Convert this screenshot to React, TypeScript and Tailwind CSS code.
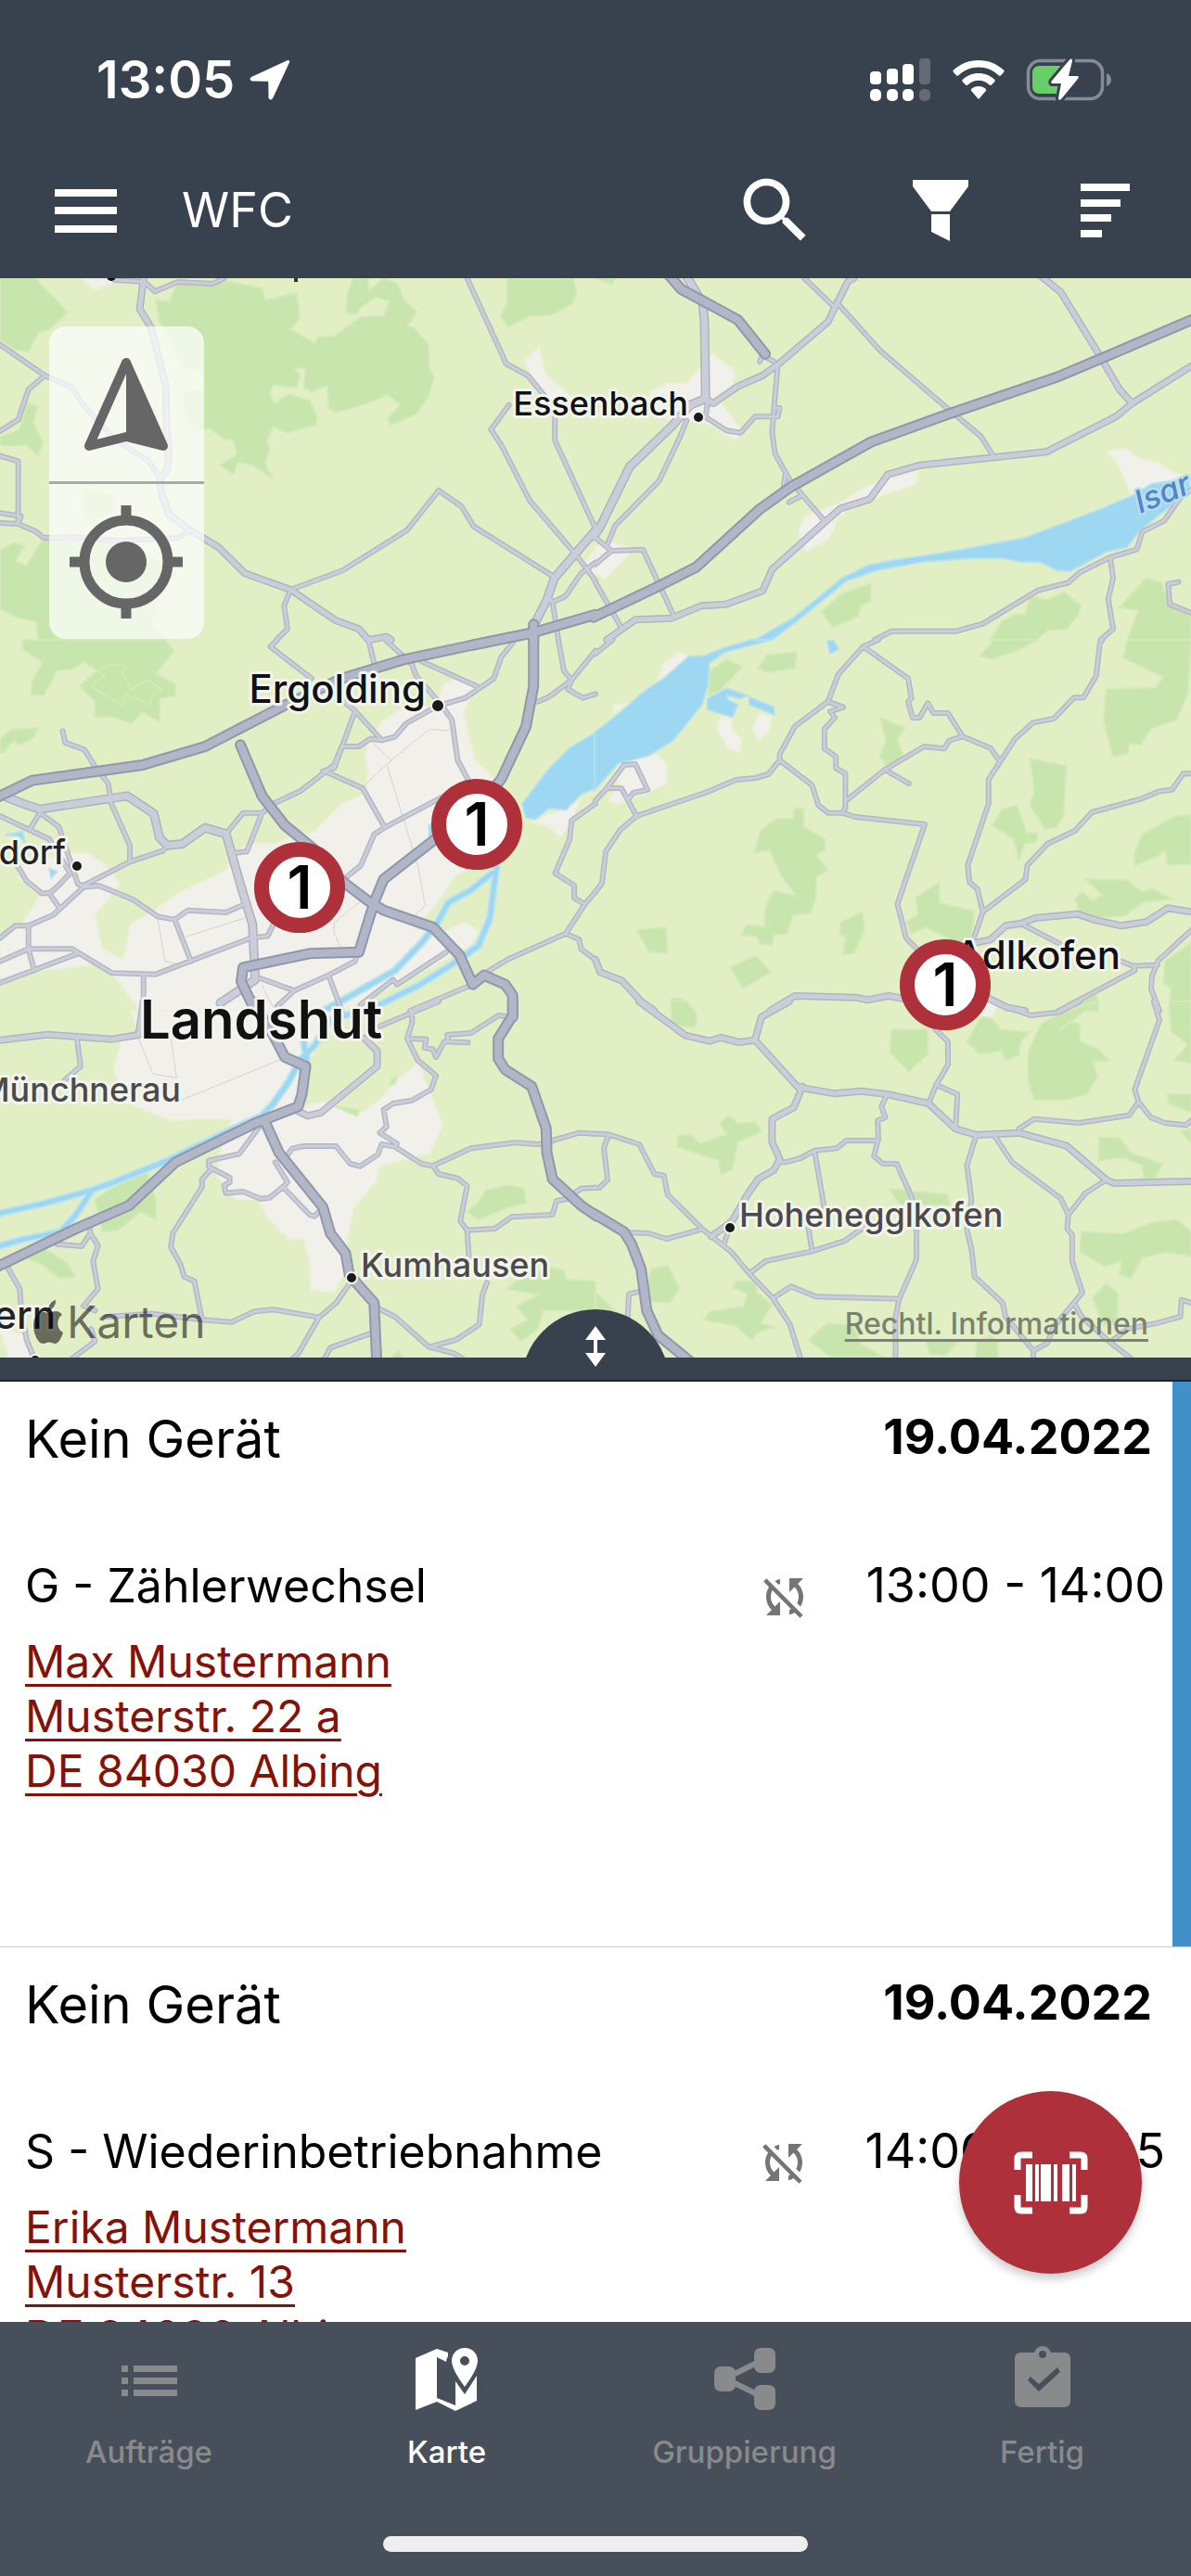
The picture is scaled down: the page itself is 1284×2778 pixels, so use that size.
import React from 'react';
import { MdSearch, MdSyncDisabled } from 'react-icons/md';

type Layer = 'urban' | 'forest' | 'water' | 'river' | 'thin' | 'minor' | 'mid' | 'wide' | 'major';

type Tile = { x: number; y: number } & Record<Layer, string>;

// Each tile carries its own 1568 x 1200 grid
const tiles: Tile[] = [
  {
    x: 0,
    y: -10,
    urban: 'M1420 255L1435 340 1500 410 1568 425V450L1440 430 1380 300ZM215 30H320L250 68ZM1540 950L1568 910V990Z',
    forest:
      'M0 0H70L178 140 130 195 100 208 75 268 40 262 0 230ZM410 100L445 105 470 40H600L690 62 698 102 780 78 790 160 765 195 828 240 838 220 880 218 950 155 985 152 1010 155 1025 105 990 90 950 125 940 145 912 145 914 80 930 30H970V70L1010 30 1045 45 1065 100 1098 140 1072 185 1090 190 1128 245 1130 320 1143 350 1130 410 1095 470 1030 505 1020 485 1055 440 1020 408 955 440 885 465 865 450 862 378 820 398 800 385 805 320 775 322 790 345 780 385 720 375 710 405 725 435 760 405 815 425 835 480 832 505 755 530 720 510 702 560 710 580 698 630 717 678 665 635 625 625 615 665 580 635 625 600 615 555 590 550 550 515 515 530 485 470 480 400 535 385 535 330 480 320 440 220 420 170ZM1335 30H1510L1518 85 1505 115 1450 150 1395 152 1338 188 1318 155 1335 110ZM70 430L98 445 88 500 113 560 100 605 70 570 20 572 0 570V545L50 520 60 480ZM0 910L35 885 65 895 40 945 70 960 110 880 180 870 350 880 420 950 470 990 410 1040 415 1110 400 1150 430 1200H100L95 1140 50 1130 0 1100ZM215 705L300 730 295 785 245 820 215 780Z',
    water: '',
    river: '',
    thin: '',
    minor:
      'M0 245L118 345 188 382 220 440 300 550 390 620 425 680M118 345L75 390 48 488 0 525M0 605L48 622V825M0 790L55 800 48 825M0 822L48 825 95 850 115 870 220 868 300 880 470 870 500 845M378 40L408 73 468 42 560 48 590 30M300 35L378 42M765 1038L748 1090 757 1165 728 1200M765 1038L903 975 1072 845 1155 717 1215 768 1247 833 1453 992M1230 30L1333 307 1390 345 1440 420M1340 440L1293 520 1320 570 1395 750 1510 915 1545 970 1568 1010M1461 480V555L1568 840M1440 1060L1455 1078 1488 1060 1530 985 1568 950M1455 1078L1470 1200',
    mid: 'M378 30L368 130 398 190 437 382 438 500 445 600 440 650 420 680 425 725 445 795 500 845 575 900 645 985 765 1038 885 1138 945 1165 970 1200 1018 1190 1030 1200',
    wide: 'M1572 840L1460 1000 1440 1070 1405 1155',
    major: 'M1240 1218L1400 1178 1568 1118M1405 1150V1205',
  },
  {
    x: 642,
    y: -10,
    urban:
      'M310 275L368 335 362 375 330 435 385 520 370 555 310 510 270 490 200 500 140 420 145 400 190 370 240 370ZM850 650L845 695 760 730 690 760 640 800 615 870 555 912 535 855 550 800 640 760 720 700ZM1350 590L1400 582 1420 608 1485 630 1530 665 1560 668 1410 725 1380 640ZM0 900L40 885 100 905 25 1005 0 980Z',
    forest:
      'M725 1018V1075L700 1090 690 1125 625 1160 595 1110 650 1050ZM1145 1060L1190 1070 1235 1045 1278 1090 1270 1120 1240 1165 1190 1170 1160 1200H1040L1070 1140 1110 1115 1130 1120ZM1450 1000L1490 1015 1510 1085 1568 1115V1200H1400L1430 1105 1380 1095ZM0 30H50L45 50Z',
    water:
      'M1560 680L1465 695 1420 730 1345 770 1250 815 1130 870 1000 900 960 910 800 940 720 958 650 1000 600 1050 520 1130 420 1200H465L530 1140 600 1070 660 1010 740 975 860 948 1000 935 1070 935 1120 948 1170 948 1215 975 1250 978 1300 945 1345 915 1400 900 1430 850 1490 790 1568 720Z',
    river: '',
    thin: '',
    minor:
      'M550 30L630 125M635 108L750 265 935 460 1015 542 1047 605M295 430L290 480 345 523 382 530 420 478 480 478 485 450 470 450M240 490L220 550 168 685 52 830 30 895M0 870L42 912 125 908 205 1120M42 912L0 955M0 1015L70 1165M1355 933L1363 1000 1350 1068 1363 1165 1330 1200M1535 1013L1508 1020 1512 1085 1568 1113M432 300L440 280 470 300M500 665L495 705M510 755L540 735M480 310L470 450 465 530 473 598 510 680 540 725 605 818M1568 715L1540 740 1497 815 1440 850 1425 908 1355 933 1275 982 1245 1015 1165 1040 1020 1148 950 1172 780 1172 735 1200',
    mid: 'M680 30L665 40 630 125 613 170 480 310 440 345 375 380 310 435 290 420M1175 25L1225 75 1325 275 1380 390 1413 435M1568 315L1413 435 1370 478 1187 592 855 635 770 665 722 745 645 775 605 818 465 972 440 1042 343 1085 278 1090 200 1130 105 1135 30 1200',
    wide: 'M240 25L282 110 287 170 290 420 250 440 200 510 90 640 10 840 -5 865',
    major: 'M1575 162L1345 283 1215 350 940 465 725 560 515 705 430 780 265 965 160 1030 -5 1127M190 15L225 65 375 165 447 275',
  },
  {
    x: 0,
    y: 390,
    urban:
      'M0 960L50 930 80 880 110 820 50 770 50 730 180 690 230 690 280 730 315 790 270 860 250 885 268 1000 325 1035 345 920 400 880 470 820 590 750 630 690 650 660 720 660 780 635 830 620 900 530 960 500 970 420 960 370 975 330 1010 260 1060 220 1150 215 1170 140 1200 130 1250 150 1220 240 1250 390 1310 460 1340 700 1200 760 1150 850 1090 940 1180 940 1220 915 1260 940 1240 990 1100 1080 1000 1140 900 1202H370L310 1100 250 1050 100 1070 0 1100ZM1400 590L1480 550 1525 520 1500 600 1475 635 1440 600Z',
    forest:
      'M60 0H435L458 35 430 80 410 110 462 145V180L420 190V265L375 235 345 270 300 250H250V200L210 150 245 110 290 80 330 85 322 105 345 160 390 130 425 160 400 180 395 210 330 175 325 215 240 150 275 115 220 70 190 95 150 100 115 180 82 178 85 130 112 75 60 30ZM30 290L100 285 90 315 50 340 35 325 10 365H0V320Z',
    water:
      'M1568 300L1500 350 1440 425 1375 530 1385 575 1410 580 1445 545 1490 550 1530 500 1568 480ZM130 740L150 750 135 770ZM1130 600L1145 595V645L1130 635ZM15 630L60 620 65 655 50 635Z',
    river:
      'M1308 730L1290 900 1260 990 1190 1050 1100 1120 1000 1180 950 1210M1295 755L1240 810 1180 850 1150 920 1110 980 1040 1070 940 1140 845 1205',
    thin: 'M975 325L1030 390 960 470M1030 390L1130 290 1180 293M1020 410L1100 730 1120 860 1090 895M415 900L435 1040 470 1050M490 960L645 900M950 845L880 915V950L895 990M690 1120L720 1190',
    minor:
      'M165 295L172 333 222 355 250 410 285 465 293 530 342 665V718M105 560L155 605 205 790 220 795 342 718 430 682 440 665M105 560L80 610M0 570L130 645 185 755 150 800 130 820 110 820 70 780 40 720M130 820L158 870M0 965L40 925 75 925 140 890 220 800 260 795 350 840 415 895 460 905 495 875 595 882 640 858M75 925V1000L90 1070M0 1040L75 1000H190L205 1015 0 1110M190 1000L295 1078 410 1082 500 1040 660 965 705 958 720 920M460 905L503 1040M378 1082V1200M595 628L640 560H690L720 530 790 490 880 405 900 345 945 345 975 320 1005 325 1040 313 1070 270 1150 215 1225 188 1300 125 1320 55 1350 10M690 560L650 685 615 690M850 425L880 415 935 230 1005 325M935 230L905 200M820 125L712 22 730 0M855 425L955 480 1013 607M1170 505L1013 607 985 630 950 730 915 765M970 0L985 75M1015 0L1085 80 1095 115 1165 215 1190 260 1205 390 1240 470M1110 70L1255 150M1470 0L1485 100 1505 130 1445 185 1415 200M1568 35L1505 130 1495 160 1535 188 1568 175M1568 530L1505 585 1500 645 1462 755 1512 795V835L1540 855 1490 950 1335 1035 1275 1080 1245 1115 1080 1200M1490 950L1525 970 1530 1000 1568 1035M1540 855L1568 815M940 1020L935 1040 865 1085 775 1135 685 1095M865 1085L900 1200M775 1135L730 1185M1175 1010L1045 1115 1035 1100 950 1180',
    mid: '',
    wide: 'M10 505L60 530 105 548 335 505 405 562 420 640 440 665 480 660 540 608 595 628 635 800 665 920 672 1100 580 1175',
    major:
      'M-5 508L85 455 375 405 540 345 745 215 900 125 1060 65 1240 18 1400 -22M1405 -20V150L1385 280 1320 450 1260 540 1140 650 1010 775 985 850 945 1010 815 1015 640 1060 635 1105 668 1190 680 1215M633 340L690 505 750 600 820 670 900 780 970 845 1010 875 1140 930 1210 1020 1245 1115 1275 1085 1330 1115 1350 1150V1220',
  },
  {
    x: 642,
    y: 390,
    urban:
      'M220 40L245 55 165 130 180 75ZM50 210H80L50 235ZM60 400L160 370 185 400 188 465 60 530 35 520 60 470ZM330 250L360 255 358 290 385 325 378 365 350 350 320 285ZM430 240L463 250 455 300 430 325 415 290Z',
    forest:
      'M345 65L388 85 330 160 297 180 300 100ZM450 50L530 38 525 92 455 105 428 92ZM1050 0H1165L1110 35 1045 62 1012 52ZM1400 0H1568L1560 170 1530 260 1465 285 1435 340 1405 335 1400 370 1362 378 1338 260 1345 160 1475 155 1495 120 1390 58ZM750 252L815 285 795 320 808 370 800 400 765 405 748 375 765 330ZM1145 385L1240 408 1232 570 1215 605 1185 612 1143 535 1155 490ZM1070 548L1110 535 1135 625H1165L1160 655 1130 660 1115 710 1100 645 1045 600ZM525 545H548V605L605 645V680L580 695 612 745 582 765 580 840 565 885 520 890 505 950 470 955 465 988 435 985 425 960 385 955 398 920 445 930 447 865 468 812 530 830 490 765 458 680 418 690 435 615 475 580 520 578ZM108 938L185 930 190 1015 140 1008ZM355 1060L422 1022 462 1075 388 1128ZM645 915L702 880 708 940 680 1015 652 1018 660 965 643 950ZM905 785V850L998 878 990 960 965 990 870 930 830 950 818 910 850 890 842 835ZM1568 568V725L1505 728 1500 680 1480 700 1420 730 1418 700 1438 632 1525 570ZM1290 775L1400 778 1438 815 1465 805 1520 838 1440 850 1395 892 1330 900 1275 880 1262 840 1280 815 1310 845 1335 825ZM200 1160L225 1158 262 1200H200ZM1320 1145L1325 1200H1230ZM1568 980L1500 1040 1495 1110 1515 1130 1510 1200H1568Z',
    water:
      'M465 0L340 40 300 75 295 150 280 210 205 325 140 375 60 400 -2 485V300L70 230 130 165 180 125 245 55 285 52 340 25 410 0ZM295 190L345 158 400 180 380 190 345 180 350 195 375 210 360 250 295 225ZM405 185L470 218V242L405 210ZM610 5L625 0 640 30 618 45Z',
    river: '',
    thin: '',
    minor:
      'M745 0L705 22 640 110 612 200 525 280 485 370V390L570 470 587 535 612 560H650L685 573 867 597 795 855 818 965 850 1005M705 22L823 125 832 190 823 200 835 252H853L875 205 890 237H928L967 313 1040 350 1065 395M612 200L652 218 618 232 630 252 603 288V352L633 378V415L658 433V545L650 560M660 520L762 420 865 345 918 352 932 325 967 313M762 420L825 465M1335 0L1328 12 1318 118 1285 187H1260L1207 255 1152 268 1105 320 1035 452V530L980 730 985 785 1005 805 1020 880 992 980M1568 433H1548L1518 485 1485 490 1435 515 1307 558 1262 618 1190 660 1137 730 1132 775 1020 880M485 390L455 435 422 447 370 453 288 495 108 570 65 615 27 685 17 788 0 815M108 570L85 518 100 495 137 485 105 402 75 405 30 480 0 520M30 480H68L85 518M1120 918L1225 985M1568 940L1480 1040 1465 1090 1463 1130 1485 1200M1480 1052L1415 1055 1385 1040M1415 1055L1420 1070 1220 1200M0 45L45 0',
    mid: 'M992 982L1040 970 1080 925 1120 918 1158 900 1268 887 1320 908 1385 925 1450 913 1507 868 1568 880M0 1035L12 1075 70 1103 120 1170 155 1200M460 1200L525 1152 685 1157 715 1165 772 1152 830 1165M1035 1160L1085 1190 1130 1200',
    wide: '',
    major: '',
  },
  {
    x: 0,
    y: 780,
    urban:
      'M345 30H940L840 130 780 280 790 345 850 325 885 345 940 370 1000 320 1040 260 1100 200 1130 290 1165 400 1130 490 1000 530 990 580 930 670 910 800 905 880 880 940 820 935 815 840 800 765 760 770 700 690 680 640 620 640 570 560 580 490 610 380 540 378 450 385 320 320 300 210 320 130 365 100ZM0 1060L60 1080 90 1155H25Z',
    forest:
      'M385 545L410 640V705L370 680 310 740 270 745 250 640 300 600ZM60 825L120 800 175 845 200 890 155 895 110 850ZM1335 595L1380 605 1385 650 1330 670 1260 705 1230 680 1260 650 1280 610ZM1335 930L1370 895 1450 860 1485 870 1490 900 1568 905V1000H1430L1415 1060 1370 1100 1345 1060 1390 1030 1360 985 1420 950ZM1030 1155L1048 1130 1062 1155ZM1030 250L1045 240 1040 265 1028 270ZM885 340L945 350 940 370Z',
    water: '',
    river:
      'M0 685L110 655 230 615 300 585 440 515 600 420 690 370 720 330 760 260 790 190 830 140 870 60 950 30M0 790L60 770 160 745 200 690 240 615M800 130L808 190',
    thin: 'M365 120L403 235 465 247 450 120M480 318L740 187',
    minor:
      'M203 122L212 210 170 255M1000 80L1155 0M1085 35V70L1072 120 1100 190 1148 240 1135 285 1085 320 1035 330 1010 350 1018 405 1000 425 1045 460 1040 470 1110 525 1140 532 1240 475 1355 457 1420 462 1525 425 1568 428M1075 120L1122 122 1118 150 1140 155 1148 180 1170 130 1232 133M1180 125L1178 108 1240 102 1313 45 1330 48M1040 470L1005 462 995 495 948 533 922 525 885 468H800L770 475 755 500M1140 532L1155 558 1205 572 1230 597 1212 710 1230 740 1235 830M1230 740L1303 735 1347 697 1455 690 1465 645 1490 640 1530 605 1568 602M725 520L757 585 745 600 710 635 685 638 640 615 595 620 590 595 605 585V570L550 535V515L630 493 680 410M745 600L815 690 828 695 850 665M555 545L532 575V600L455 750 450 795 475 850 485 890 512 905 532 1030 610 1037 670 1003 720 997 840 1022M925 905L885 975 840 1022 785 1140 770 1155M985 1070L870 1120 855 1155M992 990L1040 1020 1130 1118 1200 1095 1262 1045 1270 950 1282 910M1130 1118L1195 1138 1218 1155M150 785L215 792 238 750 258 790 245 840 258 930 220 985 250 1000M20 860L52 930 55 985 70 1095 90 1155M240 1060L250 1100 190 1155M280 1020L400 1010 532 1030M238 750L235 725',
    mid: 'M0 125L125 107 295 122 365 108 378 0M785 355L810 370 845 360 993 210V160L960 120',
    wide: '',
    major:
      'M665 0L720 110 750 180 805 210 795 300 785 340 670 395 462 520 340 660 200 735 -5 857M700 395L735 490 850 665 870 750 910 815 920 885 985 975 992 1165M1350 0V45L1312 120V185L1330 220 1400 275 1438 410 1440 490 1455 575 1530 660 1572 695',
  },
  {
    x: 642,
    y: 780,
    urban: 'M1030 0H1062L1045 50H1010Z',
    forest:
      'M200 0H240L268 45 262 85 200 75ZM780 90L840 92 875 88V170L825 228 775 165ZM1015 50L1045 55 1065 90 1140 100 1118 135 1115 175 1080 190 1068 160 1010 170 978 130ZM1320 0L1220 95 1250 65 1275 75V130L1325 155 1352 190 1310 195 1322 240 1295 300 1240 318 1155 318 1138 250 1140 160 1175 70 1240 30ZM1510 0H1568V200L1525 190 1560 140 1515 95ZM1505 300H1568V360L1510 330ZM1568 410V460L1540 420ZM350 368L375 395 420 390 438 420 375 455 360 545 330 560 325 515 215 470 218 435 250 430 275 460 345 430 328 395ZM1325 440H1380L1410 490 1493 525 1470 575 1445 572 1440 530 1390 505 1325 515ZM775 607L925 625 935 660 800 655ZM1530 705L1568 745V825L1500 810 1440 830 1410 895 1380 885 1385 840 1340 858 1275 810 1280 745 1390 752 1460 718ZM150 865L190 855 222 930 195 975 140 970V890ZM370 905H420L425 940 465 980 435 1040 475 1055 435 1065 410 1095 370 1050 285 1030 300 1005 390 985 400 945 360 925ZM1345 912L1375 945V1040L1340 1050 1308 960ZM610 1040L680 1050 700 1110 758 1150H620L560 1095ZM870 1095H960L920 1145 880 1140ZM1005 1100L1040 1080 1060 1100V1155H1000ZM0 940L50 1000H0Z',
    water: '',
    river: '',
    thin: '',
    minor:
      'M1050 0L1090 20 1145 45 1220 35 1275 0M895 90L928 130V205L897 270 877 330M897 270L953 300 948 412M1115 412L1155 380 1272 393 1405 368 1430 325 1420 285 1485 60 1470 0M1430 325L1462 375 1500 393 1555 400 1568 385M1003 432L978 530 990 640 978 740 990 800 998 890 1072 975 1080 1020 1153 1130V1155M1153 1130L1190 1105 1205 1055 1282 942 1255 840V755L1242 735 1245 690 1225 637 1097 520 1048 430M1245 690L1290 620 1345 577M768 300L753 340 763 375 743 385 745 445 733 500 757 525H793L835 640 845 740V835L800 962 790 1020V1155M743 450H660L635 475 577 482 540 507 500 520 485 520M577 485L602 665M560 730L570 805M720 720L655 775 570 808 448 840 405 880M0 428L35 430 115 462 155 558 180 563 190 625 280 735 357 810 405 880 467 960 512 1045 540 1155M35 430L22 475 32 577 10 603H0M80 747L140 750 188 768 280 737M350 740L338 785M467 960L515 922 580 955 800 962M110 940L88 947 85 1020M1260 975L1280 1020 1355 1103 1410 1155M1355 1103L1400 1060 1480 1040 1540 1020 1543 965 1568 975',
    mid: 'M115 0L237 110 300 128 330 117 378 132 420 125 437 50 510 0M420 125L535 280 545 275 522 343 465 380V455L485 510 470 545 428 575 400 625 360 710 340 730 305 760M545 280L630 298 700 290 768 300 877 330 948 412 1003 432 1115 425 1240 467 1345 577 1365 588 1568 582',
    wide: '',
    major: 'M-5 686L75 745 95 785 120 865 135 1000 165 1080 250 1165',
  },
];

const fills: { layer: Layer; color: string; edge: string }[] = [
  { layer: 'urban', color: '#f1f0ea', edge: '#edf0dc' },
  { layer: 'forest', color: '#c8e5ae', edge: '#d3eab8' },
  { layer: 'water', color: '#9dd7f2', edge: '#b5e0ee' },
];

const strokes: { layer: Layer; color: string; width: number }[] = [
  { layer: 'river', color: '#c3e6ec', width: 9 },
  { layer: 'river', color: '#9dd7f2', width: 5 },
  { layer: 'thin', color: '#d3d3d3', width: 1 },
  { layer: 'minor', color: '#b4b8c6', width: 6 },
  { layer: 'mid', color: '#b0b5c4', width: 8 },
  { layer: 'wide', color: '#adb2c3', width: 10 },
  { layer: 'minor', color: '#cbced8', width: 3 },
  { layer: 'mid', color: '#cbced8', width: 5 },
  { layer: 'wide', color: '#cbced9', width: 7 },
  { layer: 'major', color: '#9197ac', width: 12 },
  { layer: 'major', color: '#b1b7c6', width: 8 },
];

const places = [
  { name: 'Essenbach', x: 742, y: 148, end: true, style: 'text-[36px] font-medium fill-[#111]', dot: [753, 150, 6] },
  { name: 'Ergolding', x: 459, y: 458, end: true, style: 'text-[42px] font-medium fill-[#111]', dot: [472, 461, 7] },
  { name: 'dorf', x: 71, y: 632, end: true, style: 'text-[36px] font-medium fill-[#222]', dot: [83, 634, 6] },
  { name: 'Landshut', x: 151, y: 820, end: false, style: 'text-[58px] font-semibold fill-[#111]' },
  { name: 'Adlkofen', x: 1208, y: 745, end: true, style: 'text-[42px] font-medium fill-[#111]' },
  { name: 'Münchnerau', x: 195, y: 888, end: true, style: 'text-[36px] font-medium fill-[#4a4a4a]' },
  { name: 'Kumhausen', x: 389, y: 1077, end: false, style: 'text-[36px] font-medium fill-[#4a4a4a]', dot: [379, 1078, 6] },
  { name: 'Hohenegglkofen', x: 797, y: 1023, end: false, style: 'text-[36px] font-medium fill-[#4a4a4a]', dot: [787, 1024, 6] },
  { name: 'ern', x: 60, y: 1133, end: true, style: 'text-[42px] font-medium fill-[#222]', dot: [38, 1167, 6] },
];

const pins = [
  { id: 'ergolding', x: 514, y: 589 },
  { id: 'landshut', x: 323, y: 657 },
  { id: 'adlkofen', x: 1019, y: 762 },
];

const orders = [
  {
    title: 'Kein Gerät',
    date: '19.04.2022',
    job: 'G - Zählerwechsel',
    time: '13:00 - 14:00',
    address: ['Max Mustermann', 'Musterstr. 22 a', 'DE 84030 Albing'],
    marked: true,
  },
  {
    title: 'Kein Gerät',
    date: '19.04.2022',
    job: 'S - Wiederinbetriebnahme',
    time: '14:00 - 14:45',
    address: ['Erika Mustermann', 'Musterstr. 13', 'DE 84030 Albing'],
    marked: false,
  },
];

const MapDrawing = () => (
  <svg className="block w-full h-auto" viewBox="0 0 1284 1164" role="img" aria-label="Landshut">
    <rect width="1284" height="1164" fill="#e2efc5" />
    {fills.map(({ layer, color, edge }) =>
      tiles.map((t) => (
        <g key={`${layer}-${t.x}-${t.y}`} transform={`translate(${t.x} ${t.y}) scale(.40944 .33333)`}>
          <path d={t[layer]} fill={color} stroke={edge} strokeWidth="2" vectorEffect="non-scaling-stroke" />
        </g>
      ))
    )}
    {strokes.map(({ layer, color, width }, i) =>
      tiles.map((t) => (
        <g key={`${i}-${t.x}-${t.y}`} transform={`translate(${t.x} ${t.y}) scale(.40944 .33333)`}>
          <path
            d={t[layer]}
            fill="none"
            stroke={color}
            strokeWidth={width}
            strokeLinecap="round"
            strokeLinejoin="round"
            vectorEffect="non-scaling-stroke"
          />
        </g>
      ))
    )}
    <circle cx="120" cy="-2" r="5" fill="#111" />
    <rect x="317" y="0" width="4" height="4" fill="#333" />

    {/* Place names */}
    {places.map((p) => (
      <g key={p.name}>
        {p.dot && <circle cx={p.dot[0]} cy={p.dot[1]} r={p.dot[2]} fill="#1a1a1a" stroke="#f4f6ee" strokeWidth="2" />}
        <text
          x={p.x}
          y={p.y}
          textAnchor={p.end ? 'end' : 'start'}
          stroke="#f3f4ee"
          strokeWidth="6"
          strokeLinejoin="round"
          paintOrder="stroke"
          className={p.style}
        >
          {p.name}
        </text>
      </g>
    ))}
    <text
      transform="translate(1229 254) rotate(-22)"
      stroke="#b5e0f2"
      strokeWidth="5"
      strokeLinejoin="round"
      paintOrder="stroke"
      className="text-[34px] font-medium italic fill-[#5584c8]"
    >
      Isar
    </text>
  </svg>
);

const StatusBar = () => (
  <div className="flex items-center justify-between pt-14 pl-[104px] pr-[86px]">
    <div className="flex items-center gap-4 text-[56px] leading-[60px] font-semibold">
      13:05
      <svg className="w-11 h-11" viewBox="0 0 44 44" fill="currentColor">
        <path d="M40.500 1.200 2.500 18.800C-.4 20.200.3 23.600 3.300 23.600L19.300 23.800Q20.300 23.800 20.300 24.800L20.500 40.700C20.500 43.700 24 44.500 25.300 41.500L42.900 3.600C43.800 1.700 42.300.4 40.500 1.200Z" />
      </svg>
    </div>
    <div className="flex items-center gap-6">
      <svg className="w-[65px] h-[46px]" viewBox="0 0 65 46" fill="currentColor">
        <rect x="0" y="14" width="12" height="14" rx="4" />
        <rect x="18" y="11" width="12" height="17" rx="4" />
        <rect x="35" y="6" width="12" height="22" rx="4" />
        <rect x="53" y="0" width="12" height="28" rx="4" opacity=".22" />
        <rect x="0" y="33" width="12" height="13" rx="5" />
        <rect x="18" y="33" width="12" height="13" rx="5" />
        <rect x="35" y="33" width="12" height="13" rx="5" />
        <rect x="53" y="33" width="12" height="13" rx="5" opacity=".22" />
      </svg>
      <svg className="w-14 h-[42px]" viewBox="0 0 56 42" fill="currentColor">
        <path d="M28 0C17.500 0 8 4 1 10.600Q-.2 11.800 1 13L4 16.200Q5.200 17.400 6.500 16.200C12.200 10.800 19.700 7.600 28 7.600S43.800 10.800 49.500 16.200Q50.800 17.400 52 16.200L55 13Q56.200 11.800 55 10.600C48 4 38.500 0 28 0Z" />
        <path d="M28 14C21.400 14 15.300 16.600 10.800 20.800Q9.600 22 10.800 23.200L14 26.400Q15.200 27.400 16.400 26.400C19.500 23.500 23.500 21.800 28 21.800S36.500 23.500 39.600 26.400Q40.800 27.400 42 26.400L45.200 23.200Q46.400 22 45.200 20.800C40.700 16.600 34.600 14 28 14Z" />
        <path d="M28 28C25 28 22.300 29 20.200 31Q19.200 32 20.200 33L27 40.900Q28 42 29 40.900L35.800 33Q36.800 32 35.800 31C33.700 29 31 28 28 28Z" />
      </svg>
      <svg className="w-[91px] h-11 overflow-visible" viewBox="0 0 91 44">
        <rect x="1.500" y="1.500" width="80" height="41" rx="13" fill="none" stroke="#868b94" strokeWidth="3.500" />
        <path d="M86 15Q91 17 91 22T86 29Z" fill="#868b94" />
        <path d="M14 7H42V37H14Q6 37 6 29V15Q6 7 14 7Z" fill="#67cf67" />
        <path d="M43 5H60V39H37Z" fill="#38414e" />
        <path
          d="M46 0.500 27 23Q25 26 28 26H37L34 42Q34 45 37 43L55 21Q57 18 54 18H45L49 2Q49 -2 46 0.500Z"
          fill="#fff"
          stroke="#38414e"
          strokeWidth="6"
          paintOrder="stroke"
        />
      </svg>
    </div>
  </div>
);

const AppBar = () => (
  <div className="flex items-center px-[58px] pt-[65px] pb-[27px]">
    <button type="button" aria-label="Menü" className="w-[68px] h-[88px] flex items-center">
      <svg className="w-[68px] h-12" viewBox="0 0 68 48" fill="currentColor">
        <path d="M1 1H68V9H1ZM1 20H68V28H1ZM1 40H68V48H1Z" />
      </svg>
    </button>
    <h1 className="ml-[70px] text-[52px] leading-[60px] flex-1">WFC</h1>
    <button type="button" aria-label="Suchen">
      <MdSearch className="w-[92px] h-[92px]" />
    </button>
    <button type="button" aria-label="Filtern" className="ml-[102px]">
      <svg className="w-[60px] h-[66px]" viewBox="0 0 60 66" fill="currentColor">
        <path d="M0 0H60V7L40 34H20L0 7ZM20 37H40V66L20 56Z" />
      </svg>
    </button>
    <button type="button" aria-label="Sortieren" className="ml-[120px]">
      <svg className="w-[62px] h-[58px]" viewBox="0 0 62 58" fill="currentColor">
        <path d="M1 0H54V8H1ZM1 17H44V25H1ZM1 33H34V41H1ZM1 50H24V58H1Z" />
      </svg>
    </button>
  </div>
);

const OrderItem = ({ order }: { order: (typeof orders)[number] }) => (
  <li className={`flex border-b border-[#c8c8c8] ${order.marked ? 'h-[610px]' : ''}`}>
    <div className="flex-1 pl-[27px] pt-8">
      <div className="flex justify-between items-start pr-[22px]">
        <h2 className="text-[56px] leading-[60px]">{order.title}</h2>
        <p className="text-[52px] leading-[56px] font-bold">{order.date}</p>
      </div>
      <div className="flex items-start mt-[98px] pr-2">
        <p className="flex-1 text-[50px] leading-[60px]">{order.job}</p>
        <MdSyncDisabled className="w-[60px] h-[60px] mt-3 mr-[58px] text-[#757575]" />
        <p className="text-[52px] leading-[60px]">{order.time}</p>
      </div>
      <a href="#adresse" className="inline-block mt-[10px] text-[48px] leading-[59px] text-[#851209] underline decoration-[3px] underline-offset-[7px]">
        {order.address.map((line) => (
          <span key={line} className="block">
            {line}
          </span>
        ))}
      </a>
    </div>
    <div className={`w-5 ${order.marked ? 'bg-[#4190ca]' : ''}`} />
  </li>
);

const tabs = [
  {
    name: 'Aufträge',
    active: false,
    icon: <path d="M4 19H11V26H4ZM17 19H64V26H17ZM4 32H11V39H4ZM17 32H64V39H17ZM4 45H11V52H4ZM17 45H64V52H17Z" />,
  },
  {
    name: 'Karte',
    active: true,
    icon: (
      <>
        <path fillRule="evenodd" d="M0 11 23 1 35 5V9Q33 12 33 15L23 10V54L43 62V36L53 50 66 30V57L43 68 23 58 0 67Z" />
        <path fillRule="evenodd" d="M53 0A14 14 0 0 1 67 14Q67 23 53 42 39 23 39 14A14 14 0 0 1 53 0ZM53 9A5 5 0 1 0 53 19 5 5 0 1 0 53 9Z" />
      </>
    ),
  },
  {
    name: 'Gruppierung',
    active: false,
    icon: (
      <>
        <rect x="1" y="20" width="23" height="27" rx="7" />
        <rect x="44" y="0" width="23" height="27" rx="7" />
        <rect x="44" y="40" width="23" height="27" rx="7" />
        <path d="M55 12 13 33 55 54" fill="none" stroke="currentColor" strokeWidth="6" />
      </>
    ),
  },
  {
    name: 'Fertig',
    active: false,
    icon: (
      <path
        fillRule="evenodd"
        d="M11 5H25Q28-2 34-2T43 5H57Q64 5 64 12V57Q64 64 57 64H11Q4 64 4 57V12Q4 5 11 5ZM34 3A4 4 0 1 0 34 11 4 4 0 1 0 34 3ZM18 35 30 47 53 26 50 21 30 39 21 31Z"
      />
    ),
  },
];

const App = () => {
  return (
    <div className="h-screen flex flex-col bg-white text-black overflow-hidden font-['Inter','Liberation_Sans',sans-serif]">
      {/* Header */}
      <header className="bg-[#38414e] text-white">
        <StatusBar />
        <AppBar />
      </header>

      {/* Map */}
      <section className="relative shrink-0">
        <MapDrawing />

        <div className="absolute left-[53px] top-[52px] w-[167px] rounded-[18px] bg-white/70 text-[#666] divide-y-[3px] divide-[#aaa] overflow-hidden">
          <button type="button" aria-label="Norden" className="block w-full">
            <svg className="block w-full" viewBox="0 0 167 167">
              <path d="M83 39 43 129 83 119 123 129Z" fill="none" stroke="currentColor" strokeWidth="10" strokeLinejoin="round" />
              <path d="M83 36V120L123 130Z" fill="currentColor" />
            </svg>
          </button>
          <button type="button" aria-label="Eigener Standort" className="block w-full">
            <svg className="block w-full" viewBox="0 0 167 167" fill="none" stroke="currentColor" strokeWidth="11">
              <circle cx="83" cy="84" r="45" />
              <circle cx="83" cy="84" r="22" fill="currentColor" stroke="none" />
              <path d="M83 23V37M83 131V145M22 84H36M130 84H144" />
            </svg>
          </button>
        </div>

        {pins.map((pin) => (
          <button
            key={pin.id}
            type="button"
            className="absolute w-[98px] h-[98px] -translate-x-1/2 -translate-y-1/2 rounded-full border-[16px] border-[#ad303a] bg-white flex items-center justify-center text-[64px] leading-none font-semibold"
            style={{ left: `${(pin.x / 1284) * 100}%`, top: `${(pin.y / 1164) * 100}%` }}
          >
            1
          </button>
        ))}

        <div className="absolute left-9 bottom-2 flex items-center gap-1 text-black/55 text-[48px] leading-[60px]">
          <svg className="w-8 h-12" viewBox="0 0 32 48" fill="currentColor">
            <path d="M16 14C19 14 21 12 24 12 27 12 30 14 31 16 24 20 25 32 32 35 30 41 27 47 23.500 47 21 47 20 45.500 17 45.500S13 47 10.500 47C5 47 0 36 0 27 0 18 5 12.500 10 12.500 12.500 12.500 14 14 16 14ZM16 11C16 5 20 1 24 0 24.500 6 20 11 16 11Z" />
          </svg>
          Karten
        </div>
        <a
          href="#rechtliches"
          className="absolute right-[46px] bottom-4 text-[32px] leading-[40px] font-medium text-[#7b8270] underline decoration-[3px] underline-offset-[5px]"
        >
          Rechtl. Informationen
        </a>

        <button
          type="button"
          aria-label="Kartenhöhe ändern"
          className="absolute left-1/2 bottom-0 w-40 h-[52px] -translate-x-1/2 overflow-hidden"
        >
          <span className="block w-40 h-40 rounded-full bg-[#38414e]" />
        </button>
        <svg className="absolute left-1/2 -bottom-2.5 w-[22px] h-11 -translate-x-1/2 z-10 pointer-events-none" viewBox="0 0 22 44" fill="#fff">
          <path d="M11 0 22 15H13V29H22L11 44 0 29H9V15H0Z" />
        </svg>
      </section>
      <div className="h-[26px] shrink-0 bg-[#38414e] border-b-2 border-[#1c2434]" />

      {/* Orders */}
      <main className="relative flex-1 min-h-0">
        <ul className="h-full overflow-hidden">
          {orders.map((order) => (
            <OrderItem key={order.job} order={order} />
          ))}
        </ul>
        <button
          type="button"
          aria-label="Barcode scannen"
          className="absolute right-[53px] bottom-[52px] w-[197px] h-[197px] rounded-full bg-[#ad303a] text-white shadow-[0_6px_10px_rgba(0,0,0,0.2)] flex items-center justify-center"
        >
          <svg className="w-20 h-[68px]" viewBox="0 0 80 68" fill="currentColor">
            <path
              d="M4 20V8Q4 4 8 4H20M60 4H72Q76 4 76 8V20M76 47V60Q76 64 72 64H60M20 64H8Q4 64 4 60V47"
              fill="none"
              stroke="currentColor"
              strokeWidth="7"
            />
            <path d="M13 14H20V54H13ZM23 14H27V54H23ZM29 14H40V54H29ZM43 14H47V54H43ZM52 14H60V54H52ZM63 14H67V54H63Z" />
          </svg>
        </button>
      </main>

      {/* Tab bar */}
      <nav className="shrink-0 bg-[#474f5b] pt-7 pb-[26px]">
        <div className="grid grid-cols-4">
          {tabs.map((tab) => (
            <button
              key={tab.name}
              type="button"
              className={`flex flex-col items-center gap-6 text-[33px] leading-[40px] font-medium ${
                tab.active ? 'text-white' : 'text-[#898a8b]'
              }`}
            >
              <svg className="w-[67px] h-[68px] overflow-visible" viewBox="0 0 67 68" fill="currentColor">
                {tab.icon}
              </svg>
              {tab.name}
            </button>
          ))}
        </div>
        <div className="mt-[71px] mx-auto w-[458px] h-[17px] rounded-full bg-[#eee]" />
      </nav>
    </div>
  );
};

export default App;
